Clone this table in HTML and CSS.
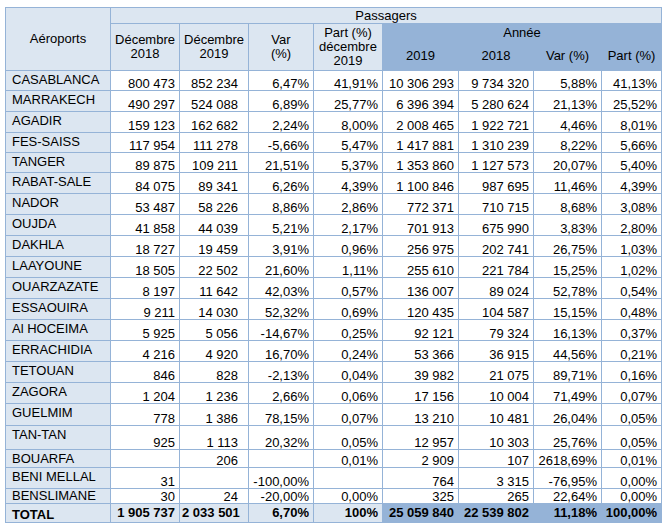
FILE: index.html
```html
<!DOCTYPE html>
<html lang="fr">
<head>
<meta charset="utf-8">
<title>Passagers</title>
<link rel="stylesheet" href="styles.css">
</head>
<body>
<table class="stats">
<colgroup>
<col class="c-name"><col class="c-d18"><col class="c-d19"><col class="c-var"><col class="c-part"><col class="c-y19"><col class="c-y18"><col class="c-yvar"><col class="c-ypart">
</colgroup>
<thead>
<tr class="h1">
<th class="hd name-h" rowspan="3">Aéroports</th>
<th class="hd" colspan="8">Passagers</th>
</tr>
<tr class="h2">
<th class="hd" rowspan="2">Décembre<br>2018</th>
<th class="hd" rowspan="2">Décembre<br>2019</th>
<th class="hd" rowspan="2">Var<br>(%)</th>
<th class="hd part-h" rowspan="2">Part (%)<br>décembre<br>2019</th>
<th class="hy annee" colspan="4">Année</th>
</tr>
<tr class="h3">
<th class="hy">2019</th>
<th class="hy">2018</th>
<th class="hy">Var (%)</th>
<th class="hy">Part (%)</th>
</tr>
</thead>
<tbody>
<tr><td class="nm">CASABLANCA</td><td>800 473</td><td class="wide">852 234</td><td>6,47%</td><td>41,91%</td><td>10 306 293</td><td>9 734 320</td><td>5,88%</td><td>41,13%</td></tr>
<tr class="r21"><td class="nm">MARRAKECH</td><td>490 297</td><td class="wide">524 088</td><td>6,89%</td><td>25,77%</td><td>6 396 394</td><td>5 280 624</td><td>21,13%</td><td>25,52%</td></tr>
<tr class="r21"><td class="nm">AGADIR</td><td>159 123</td><td class="wide">162 682</td><td>2,24%</td><td>8,00%</td><td>2 008 465</td><td>1 922 721</td><td>4,46%</td><td>8,01%</td></tr>
<tr><td class="nm">FES-SAISS</td><td>117 954</td><td class="wide">111 278</td><td>-5,66%</td><td>5,47%</td><td>1 417 881</td><td>1 310 239</td><td>8,22%</td><td>5,66%</td></tr>
<tr><td class="nm">TANGER</td><td>89 875</td><td class="wide">109 211</td><td>21,51%</td><td>5,37%</td><td>1 353 860</td><td>1 127 573</td><td>20,07%</td><td>5,40%</td></tr>
<tr class="r21"><td class="nm">RABAT-SALE</td><td>84 075</td><td class="wide">89 341</td><td>6,26%</td><td>4,39%</td><td>1 100 846</td><td>987 695</td><td>11,46%</td><td>4,39%</td></tr>
<tr class="r21"><td class="nm">NADOR</td><td>53 487</td><td class="wide">58 226</td><td>8,86%</td><td>2,86%</td><td>772 371</td><td>710 715</td><td>8,68%</td><td>3,08%</td></tr>
<tr class="r21"><td class="nm">OUJDA</td><td>41 858</td><td class="wide">44 039</td><td>5,21%</td><td>2,17%</td><td>701 913</td><td>675 990</td><td>3,83%</td><td>2,80%</td></tr>
<tr class="r21"><td class="nm">DAKHLA</td><td>18 727</td><td class="wide">19 459</td><td>3,91%</td><td>0,96%</td><td>256 975</td><td>202 741</td><td>26,75%</td><td>1,03%</td></tr>
<tr class="r21"><td class="nm">LAAYOUNE</td><td>18 505</td><td class="wide">22 502</td><td>21,60%</td><td>1,11%</td><td>255 610</td><td>221 784</td><td>15,25%</td><td>1,02%</td></tr>
<tr class="r21"><td class="nm">OUARZAZATE</td><td>8 197</td><td class="wide">11 642</td><td>42,03%</td><td>0,57%</td><td>136 007</td><td>89 024</td><td>52,78%</td><td>0,54%</td></tr>
<tr class="r21"><td class="nm">ESSAOUIRA</td><td>9 211</td><td class="wide">14 030</td><td>52,32%</td><td>0,69%</td><td>120 435</td><td>104 587</td><td>15,15%</td><td>0,48%</td></tr>
<tr class="r21"><td class="nm">Al HOCEIMA</td><td>5 925</td><td class="wide">5 056</td><td>-14,67%</td><td>0,25%</td><td>92 121</td><td>79 324</td><td>16,13%</td><td>0,37%</td></tr>
<tr class="r21"><td class="nm">ERRACHIDIA</td><td>4 216</td><td class="wide">4 920</td><td>16,70%</td><td>0,24%</td><td>53 366</td><td>36 915</td><td>44,56%</td><td>0,21%</td></tr>
<tr class="r21"><td class="nm">TETOUAN</td><td>846</td><td class="wide">828</td><td>-2,13%</td><td>0,04%</td><td>39 982</td><td>21 075</td><td>89,71%</td><td>0,16%</td></tr>
<tr class="r21"><td class="nm">ZAGORA</td><td>1 204</td><td class="wide">1 236</td><td>2,66%</td><td>0,06%</td><td>17 156</td><td>10 004</td><td>71,49%</td><td>0,07%</td></tr>
<tr class="r22"><td class="nm">GUELMIM</td><td>778</td><td class="wide">1 386</td><td>78,15%</td><td>0,07%</td><td>13 210</td><td>10 481</td><td>26,04%</td><td>0,05%</td></tr>
<tr class="r24"><td class="nm">TAN-TAN</td><td>925</td><td class="wide">1 113</td><td>20,32%</td><td>0,05%</td><td>12 957</td><td>10 303</td><td>25,76%</td><td>0,05%</td></tr>
<tr class="r18"><td class="nm">BOUARFA</td><td></td><td class="wide">206</td><td></td><td>0,01%</td><td>2 909</td><td>107</td><td>2618,69%</td><td>0,01%</td></tr>
<tr class="r21"><td class="nm">BENI MELLAL</td><td>31</td><td class="wide"></td><td>-100,00%</td><td></td><td>764</td><td>3 315</td><td>-76,95%</td><td>0,00%</td></tr>
<tr class="r15"><td class="nm">BENSLIMANE</td><td>30</td><td class="wide">24</td><td>-20,00%</td><td>0,00%</td><td>325</td><td>265</td><td>22,64%</td><td>0,00%</td></tr>
<tr class="total"><td class="nm">TOTAL</td><td>1 905 737</td><td class="wide">2 033 501</td><td>6,70%</td><td>100%</td><td class="dk">25 059 840</td><td class="dk">22 539 802</td><td class="dk">11,18%</td><td class="dk">100,00%</td></tr>
</tbody>
</table>
</body>
</html>
```

FILE: styles.css
```css
html, body {
  margin: 0;
  padding: 0;
  background: #ffffff;
}
body {
  padding: 7px 0 0 5px;
  font-family: "Liberation Sans", Arial, sans-serif;
  font-size: 13px;
  color: #000000;
}
.stats {
  border-collapse: collapse;
  table-layout: fixed;
  width: 656px;
}
.c-name { width: 105px; }
.c-d18 { width: 69px; }
.c-d19 { width: 69px; }
.c-var { width: 65px; }
.c-part { width: 69px; }
.c-y19 { width: 76px; }
.c-y18 { width: 75px; }
.c-yvar { width: 68px; }
.c-ypart { width: 60px; }

.stats th, .stats td {
  border: 1px solid #95b3d7;
  padding: 0;
  white-space: nowrap;
  overflow: hidden;
}
.stats th {
  font-weight: normal;
  text-align: center;
  vertical-align: middle;
  line-height: 14px;
}
.hd { background: #dce6f1; }
.hy {
  background: #95b3d7;
  border-color: #366092;
}
.stats .annee { border-top-color: #95b3d7; }
.h1 { height: 16px; }
.h2 { height: 18px; }
.h3 { height: 29px; }

.stats tbody tr { height: 20px; }
.stats tbody tr.r21 { height: 21px; }
.stats tbody tr.r22 { height: 22px; }
.stats tbody tr.r24 { height: 24px; }
.stats tbody tr.r18 { height: 18px; }
.stats tbody tr.r15 { height: 15px; }
.stats tbody tr.total { height: 19px; }

.stats td {
  text-align: right;
  vertical-align: bottom;
  line-height: 12px;
  padding: 0 4px 0 2px;
  background: #ffffff;
}
.stats td.wide { padding-right: 10px; }
.stats td.nm {
  background: #dce6f1;
  text-align: left;
  vertical-align: top;
  line-height: 13px;
  padding: 2px 2px 0 6px;
}
.stats tr.r15 td.nm { padding-top: 0; }
.stats tr.total td {
  font-weight: bold;
  background: #dce6f1;
  vertical-align: middle;
}
.stats tr.total td.dk { background: #95b3d7; }
```
